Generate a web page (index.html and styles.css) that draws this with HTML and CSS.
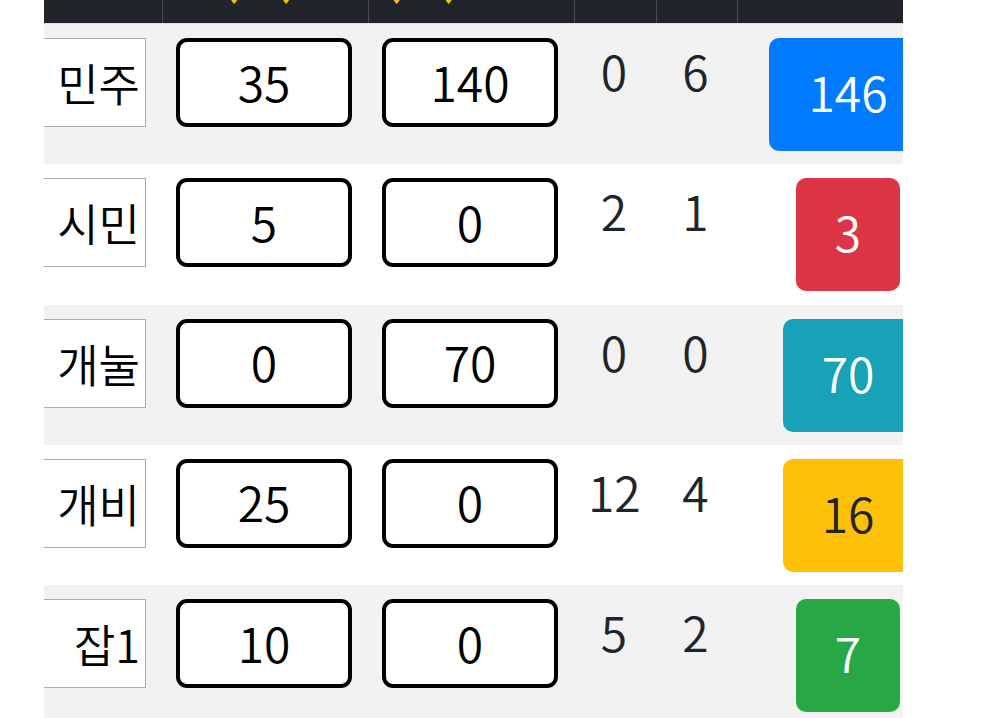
FILE: index.html
```html
<!DOCTYPE html>
<html lang="ko">
<head>
<meta charset="utf-8">
<title>집계</title>
<link rel="stylesheet" href="styles.css">
</head>
<body>
<div class="clip">
  <table class="score">
    <colgroup>
      <col class="c-name"><col class="c-num"><col class="c-num"><col class="c-a"><col class="c-b"><col class="c-total">
    </colgroup>
    <thead>
      <tr>
        <th></th>
        <th class="mark">♥♥</th>
        <th class="mark mark-left">♥♥</th>
        <th></th>
        <th></th>
        <th></th>
      </tr>
    </thead>
    <tbody>
      <tr class="odd">
        <td><input class="name" type="text" value="민주" readonly></td>
        <td><input class="box" type="text" value="35" readonly></td>
        <td><input class="box" type="text" value="140" readonly></td>
        <td class="plain">0</td>
        <td class="plain">6</td>
        <td class="tot"><span class="badge blue">146</span></td>
      </tr>
      <tr>
        <td><input class="name" type="text" value="시민" readonly></td>
        <td><input class="box" type="text" value="5" readonly></td>
        <td><input class="box" type="text" value="0" readonly></td>
        <td class="plain">2</td>
        <td class="plain">1</td>
        <td class="tot"><span class="badge red">3</span></td>
      </tr>
      <tr class="odd">
        <td><input class="name" type="text" value="개눌" readonly></td>
        <td><input class="box" type="text" value="0" readonly></td>
        <td><input class="box" type="text" value="70" readonly></td>
        <td class="plain">0</td>
        <td class="plain">0</td>
        <td class="tot"><span class="badge teal">70</span></td>
      </tr>
      <tr>
        <td><input class="name" type="text" value="개비" readonly></td>
        <td><input class="box" type="text" value="25" readonly></td>
        <td><input class="box" type="text" value="0" readonly></td>
        <td class="plain">12</td>
        <td class="plain">4</td>
        <td class="tot"><span class="badge yellow">16</span></td>
      </tr>
      <tr class="odd">
        <td><input class="name" type="text" value="잡1" readonly></td>
        <td><input class="box" type="text" value="10" readonly></td>
        <td><input class="box" type="text" value="0" readonly></td>
        <td class="plain">5</td>
        <td class="plain">2</td>
        <td class="tot"><span class="badge green">7</span></td>
      </tr>
    </tbody>
  </table>
</div>
</body>
</html>
```

FILE: styles.css
```css
html, body {
  margin: 0;
  padding: 0;
  background: #ffffff;
}

body {
  font-family: "Noto Sans CJK KR", "Noto Sans", sans-serif;
  font-size: 48px;
  font-weight: 350;
  color: #212529;
  overflow: hidden;
}

.clip {
  width: 859px;
  margin-left: 44px;
  margin-top: -69px;
  overflow: hidden;
}

.score {
  table-layout: fixed;
  border-collapse: collapse;
  width: 1005px;
  margin-left: -88px;
}

.c-name, .c-num { width: 206px; }
.c-a { width: 82px; }
.c-b { width: 81px; }
.c-total { width: 224px; }

.score th {
  background: #212529;
  color: #ffc107;
  font-weight: 400;
  font-size: 48px;
  line-height: 72px;
  padding: 14px 16px 6px 14px;
  border-right: 1px solid #454d55;
  border-bottom: 1px solid #dee2e6;
  text-align: center;
  white-space: nowrap;
  overflow: hidden;
}

.score th.mark {
  letter-spacing: 4px;
  text-indent: -4px;
}

.score th.mark-left {
  text-align: left;
  text-indent: -10px;
}

.score td {
  vertical-align: top;
  padding: 14px 16px 13.25px 14px;
  line-height: 72px;
  text-align: center;
}

.score td.plain {
  line-height: 64px;
  padding-bottom: 21.25px;
}

.score tr.odd td {
  background: #f2f2f2;
}

input {
  font-family: "Noto Sans CJK KR", "Noto Sans", sans-serif;
  font-size: 48px;
  font-weight: 350;
  color: #000;
  background: #fff;
  margin: 0;
  outline: none;
  box-sizing: border-box;
  display: block;
  width: 176px;
  height: 89px;
}

.name {
  font-size: 45px;
  border: 1px solid #aaaaaa;
  border-radius: 0;
  padding: 0 5px 0 2px;
  text-align: right;
}

.box {
  border: 4px solid #000;
  border-radius: 11px;
  padding: 0 0 4px 0;
  text-align: center;
}

.plain {
  color: #212529;
}

.badge {
  display: inline-block;
  height: 113px;
  box-sizing: border-box;
  line-height: 107px;
  padding: 0 39px 6px;
  border-radius: 10px;
  color: #fff;
  vertical-align: top;
}

.blue { background: #007bff; }
.red { background: #dc3545; }
.teal { background: #17a2b8; }
.yellow { background: #ffc107; color: #212529; }
.green { background: #28a745; }
```
